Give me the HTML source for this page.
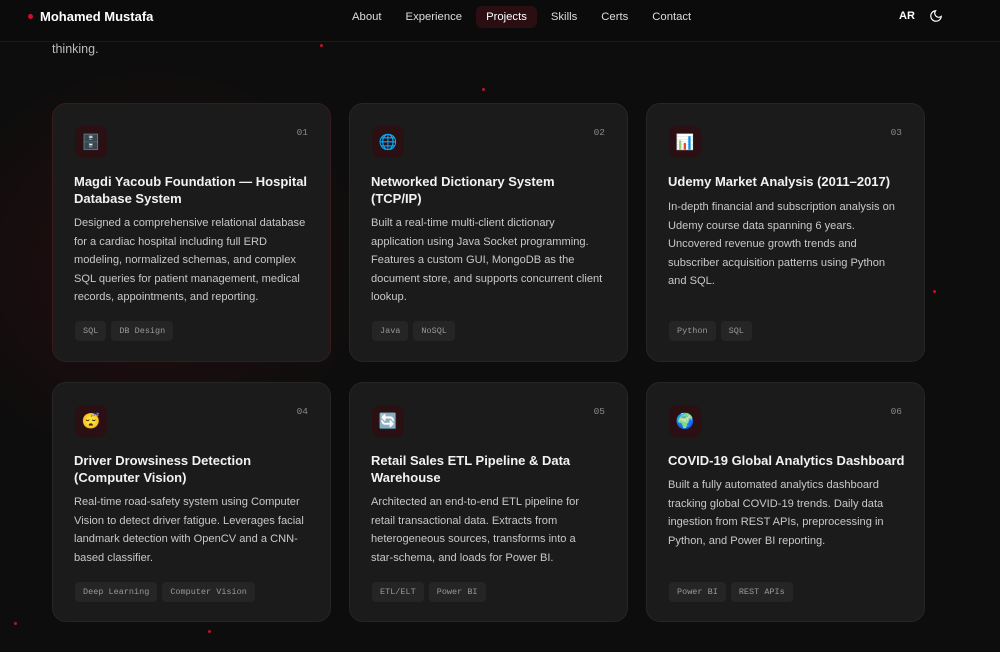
<!DOCTYPE html>
<html><head><meta charset="utf-8"><style>
*{margin:0;padding:0;box-sizing:border-box}
body{width:1000px;height:652px;overflow:hidden;background:#0d0d0d;font-family:"Liberation Sans","Noto Sans CJK SC",sans-serif;color:#fff;position:relative}
.glow{position:absolute;left:-100px;top:40px;width:500px;height:450px;background:radial-gradient(ellipse at center,rgba(120,10,20,0.22),rgba(0,0,0,0) 65%)}
nav{position:absolute;left:0;top:0;width:1000px;height:42px;background:#0b0b0b;border-bottom:1px solid #1a1a1a;z-index:3}
.logo{position:absolute;left:28px;top:9px;font-weight:bold;font-size:13px}
.logo:before{content:"";display:inline-block;width:5px;height:5px;border-radius:50%;background:#d0102a;margin-right:7px;vertical-align:2px}
.links{position:absolute;left:342px;top:6px;display:flex;font-size:11.3px;color:#ddd}
.links span{padding:5px 10px;margin-right:4px;border-radius:6px}
.links .act{background:#2a0e12;color:#fff}
.ar{position:absolute;left:899px;top:10px;font-size:11px;font-weight:bold}
.moon{position:absolute;left:929px;top:9px}
.think{position:absolute;left:52px;top:42px;font-size:12.5px;color:#bbb}
.card{position:absolute;width:279px;background:#1b1b1b;border:1px solid #262626;border-radius:14px}
.ic{position:absolute;left:22px;top:22px;width:32px;height:32px;border-radius:8px;background:#2a0f13;font-size:15px;display:flex;align-items:center;justify-content:center}
.num{position:absolute;right:22px;top:23px;font-family:"Liberation Mono",monospace;font-size:9.5px;color:#888}
.t{position:absolute;left:21px;top:69px;width:234px;font-weight:bold;font-size:13px;line-height:17px;color:#f2f2f2}
.d{position:absolute;left:21px;right:18px;font-size:11.1px;line-height:18.5px;color:#c8c8c8}
.tags{position:absolute;left:22px;display:flex}
.tags span{font-family:"Liberation Mono",monospace;font-size:8.5px;color:#999;background:#252525;border-radius:4px;padding:5px 8px;margin-right:5px}
.dot{position:absolute;width:3px;height:3px;border-radius:50%;background:#c0102a}
</style></head><body>
<div class="glow"></div>
<nav><div class="logo">Mohamed Mustafa</div>
<div class="links"><span>About</span><span>Experience</span><span class="act">Projects</span><span>Skills</span><span>Certs</span><span>Contact</span></div>
<div class="ar">AR</div>
<svg class="moon" width="14" height="14" viewBox="0 0 24 24" fill="none" stroke="#fff" stroke-width="2"><path d="M21 12.8A9 9 0 1 1 11.2 3a7 7 0 0 0 9.8 9.8z"/></svg></nav>
<div class="think">thinking.</div>
<div class="dot" style="left:320px;top:44px"></div><div class="dot" style="left:482px;top:88px"></div><div class="dot" style="left:933px;top:290px"></div><div class="dot" style="left:14px;top:622px"></div><div class="dot" style="left:208px;top:630px"></div>

<div class="card" style="left:52px;top:103px;height:259px;border-color:#3a1a1e"><div class="ic">🗄️</div><div class="num">01</div>
<div class="t">Magdi Yacoub Foundation — Hospital Database System</div>
<div class="d" style="top:110px">Designed a comprehensive relational database for a cardiac hospital including full ERD modeling, normalized schemas, and complex SQL queries for patient management, medical records, appointments, and reporting.</div>
<div class="tags" style="top:217px"><span>SQL</span><span>DB Design</span></div></div>

<div class="card" style="left:349px;top:103px;height:259px"><div class="ic">🌐</div><div class="num">02</div>
<div class="t">Networked Dictionary System<br>(TCP/IP)</div>
<div class="d" style="top:110px">Built a real-time multi-client dictionary application using Java Socket programming. Features a custom GUI, MongoDB as the document store, and supports concurrent client lookup.</div>
<div class="tags" style="top:217px"><span>Java</span><span>NoSQL</span></div></div>

<div class="card" style="left:646px;top:103px;height:259px"><div class="ic">📊</div><div class="num">03</div>
<div class="t" style="white-space:nowrap">Udemy Market Analysis (2011–2017)</div>
<div class="d" style="top:94px">In-depth financial and subscription analysis on Udemy course data spanning 6 years. Uncovered revenue growth trends and subscriber acquisition patterns using Python and SQL.</div>
<div class="tags" style="top:217px"><span>Python</span><span>SQL</span></div></div>

<div class="card" style="left:52px;top:382px;height:240px"><div class="ic">😴</div><div class="num">04</div>
<div class="t">Driver Drowsiness Detection (Computer Vision)</div>
<div class="d" style="top:110px">Real-time road-safety system using Computer Vision to detect driver fatigue. Leverages facial landmark detection with OpenCV and a CNN-based classifier.</div>
<div class="tags" style="top:199px"><span>Deep Learning</span><span>Computer Vision</span></div></div>

<div class="card" style="left:349px;top:382px;height:240px"><div class="ic">🔄</div><div class="num">05</div>
<div class="t">Retail Sales ETL Pipeline &amp; Data Warehouse</div>
<div class="d" style="top:110px;white-space:nowrap">Architected an end-to-end ETL pipeline for<br>retail transactional data. Extracts from<br>heterogeneous sources, transforms into a<br>star-schema, and loads for Power BI.</div>
<div class="tags" style="top:199px"><span>ETL/ELT</span><span>Power BI</span></div></div>

<div class="card" style="left:646px;top:382px;height:240px"><div class="ic">🌍</div><div class="num">06</div>
<div class="t" style="white-space:nowrap">COVID-19 Global Analytics Dashboard</div>
<div class="d" style="top:93px">Built a fully automated analytics dashboard tracking global COVID-19 trends. Daily data ingestion from REST APIs, preprocessing in Python, and Power BI reporting.</div>
<div class="tags" style="top:199px"><span>Power BI</span><span>REST APIs</span></div></div>
</body></html>
